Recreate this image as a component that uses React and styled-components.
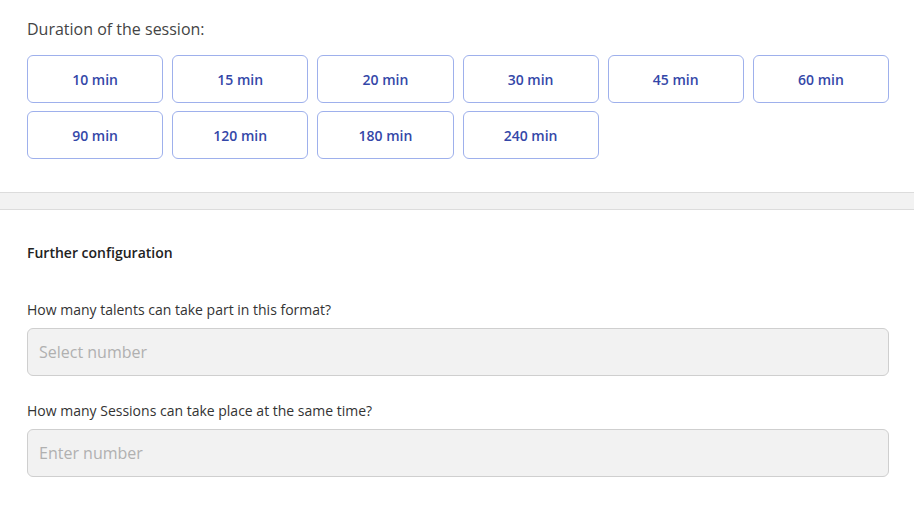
import React from "react";
import styled, { createGlobalStyle } from "styled-components";

const GlobalStyle = createGlobalStyle`
  body {
    margin: 0;
    background: #fff;
    font-family: "Open Sans", "Noto Sans", sans-serif;
  }
`;

const Page = styled.div`
  width: 914px;
`;

const Section = styled.section`
  padding: ${({ pad }) => pad};
  display: flex;
  flex-direction: column;
`;

const Title = styled.div`
  font-size: 16px;
  line-height: 20px;
  color: #444;
  margin-bottom: 16px;
`;

const DurationGrid = styled.div`
  display: grid;
  grid-template-columns: repeat(6, 1fr);
  column-gap: 9px;
  row-gap: 8px;
`;

const DurationButton = styled.button`
  height: 48px;
  border: 1px solid #9eb0ec;
  border-radius: 6px;
  background: #fff;
  color: #3447a8;
  font-family: inherit;
  font-size: 14px;
  font-weight: 600;
  cursor: pointer;
`;

const Divider = styled.div`
  height: 16px;
  background: #f2f2f2;
  border-top: 1px solid #dcdcdc;
  border-bottom: 1px solid #dcdcdc;
`;

const SubTitle = styled.div`
  font-size: 14px;
  line-height: 20px;
  font-weight: 600;
  color: #222;
  margin-bottom: 37px;
`;

const Label = styled.div`
  font-size: 14px;
  line-height: 20px;
  color: #333;
  margin-bottom: 8px;
`;

const Field = styled.input`
  box-sizing: border-box;
  width: 100%;
  height: 48px;
  padding: 0 11px;
  margin-bottom: ${({ gapAfter }) => gapAfter}px;
  background: #f2f2f2;
  border: 1px solid #cfcfcf;
  border-radius: 6px;
  font-family: inherit;
  font-size: 16px;
  color: #333;
  outline: none;

  &::placeholder {
    color: #b0b0b0;
  }
`;

const durations = [10, 15, 20, 30, 45, 60, 90, 120, 180, 240];

export default function App() {
  return (
    <Page>
      <GlobalStyle />
      <Section pad="19px 25px 33px 27px">
        <Title>Duration of the session:</Title>
        <DurationGrid>
          {durations.map((d) => (
            <DurationButton key={d}>{d} min</DurationButton>
          ))}
        </DurationGrid>
      </Section>
      <Divider />
      <Section pad="33px 25px 40px 27px">
        <SubTitle>Further configuration</SubTitle>
        <Label>How many talents can take part in this format?</Label>
        <Field placeholder="Select number" gapAfter={25} />
        <Label>How many Sessions can take place at the same time?</Label>
        <Field placeholder="Enter number" gapAfter={0} />
      </Section>
    </Page>
  );
}
